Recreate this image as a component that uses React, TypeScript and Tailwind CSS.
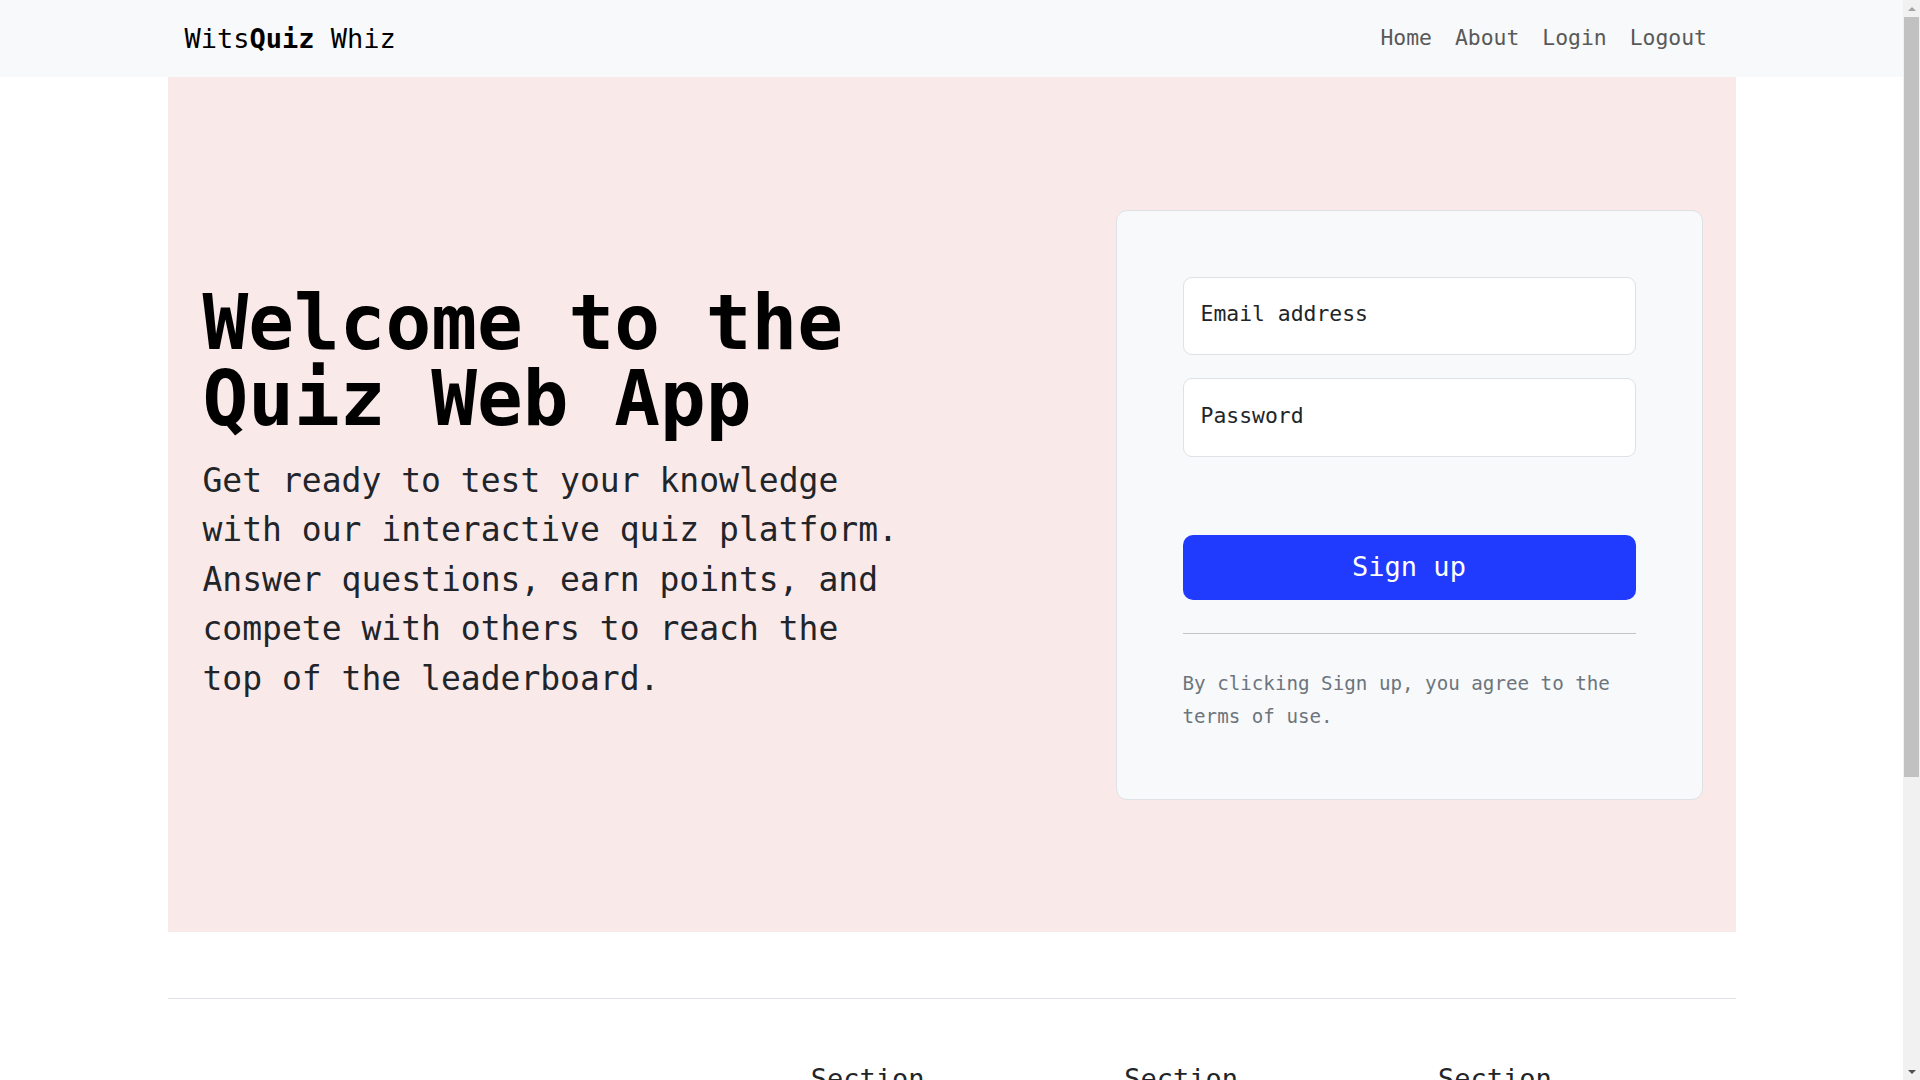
import React from 'react';

const mono = { fontFamily: '"DejaVu Sans Mono", "Liberation Mono", monospace' };

const navLinks = ['Home', 'About', 'Login', 'Logout'];
const footerLinks = ['Home', 'Features', 'Pricing', 'FAQs', 'About'];

const Navbar = () => (
  <nav className="bg-[#f8f9fa] h-[77px]">
    <div className="w-[1568px] mx-auto h-full px-[17px] flex items-center justify-between">
      <a href="#" className="text-[27px] leading-none text-black tracking-normal">
        Wits<span className="font-bold">Quiz</span> Whiz
      </a>
      <ul className="flex items-center">
        {navLinks.map((link) => (
          <li key={link}>
            <a href="#" className="block px-[11.5px] text-[21.4px] text-[#595959]">
              {link}
            </a>
          </li>
        ))}
      </ul>
    </div>
  </nav>
);

const SignupCard = () => (
  <form className="w-[587px] bg-[#f8f9fa] border border-[#dee2e6] rounded-[11px] p-[66px]">
    <input
      type="email"
      placeholder="Email address"
      className="block w-full h-[78px] bg-white border border-[#dee2e6] rounded-[9px] px-[17px] pb-[4px] text-[21.4px] text-[#212529] placeholder:text-[#212529] outline-none"
    />
    <input
      type="password"
      placeholder="Password"
      className="block w-full h-[79px] mt-[23px] bg-white border border-[#dee2e6] rounded-[9px] px-[17px] pb-[4px] text-[21.4px] text-[#212529] placeholder:text-[#212529] outline-none"
    />
    <button
      type="button"
      className="block w-full h-[65px] mt-[78px] bg-[#213bfe] rounded-[10px] text-white text-[27px]"
    >
      Sign up
    </button>
    <hr className="mt-[33px] border-0 border-t border-[#c4c5c7]" />
    <p className="mt-[33px] text-[19.2px] leading-[33px] text-[#6c757d]">
      By clicking Sign up, you agree to the terms of use.
    </p>
  </form>
);

const Hero = () => (
  <section className="w-[1568px] mx-auto h-[855px] bg-[#fae9e9] flex items-center pl-[35px] pr-[33px]">
    <div className="w-[705px]">
      <h1 className="text-[76px] leading-[76px] font-bold text-black">Welcome to the Quiz Web App</h1>
      <p className="mt-[19px] mb-[21px] text-[33px] leading-[49.5px] text-[#212529]">
        Get ready to test your knowledge with our interactive quiz platform. Answer questions, earn
        points, and compete with others to reach the top of the leaderboard.
      </p>
    </div>
    <div className="ml-auto">
      <SignupCard />
    </div>
  </section>
);

const Footer = () => (
  <footer className="w-[1568px] mx-auto mt-[66px] mb-[64px] pt-[64px] pb-[64px] border-t border-[#dee2e6] grid grid-cols-5">
    <div className="px-[16px] mb-[21px]">
      <div className="h-[32px] mb-[21px]" />
      <p className="text-[21.4px] text-[#6c757d]">© 2023</p>
    </div>
    <div className="px-[16px]" />
    {[0, 1, 2].map((i) => (
      <div key={i} className="px-[16px] mb-[21px]">
        <h5 className="text-[27px] leading-[32px] font-medium text-[#212529] mb-[11px]">Section</h5>
        <ul>
          {footerLinks.map((l) => (
            <li key={l} className="mb-[11px]">
              <a href="#" className="text-[21.4px] leading-[32px] text-[#6c757d]">
                {l}
              </a>
            </li>
          ))}
        </ul>
      </div>
    ))}
  </footer>
);

// browser scrollbar as seen in the screenshot
const Scrollbar = () => (
  <div className="w-[17px] h-full bg-[#f1f1f1] flex flex-col items-center">
    <div className="h-[17px] flex items-center justify-center">
      <div className="w-0 h-0 border-l-[4px] border-r-[4px] border-b-[4px] border-l-transparent border-r-transparent border-b-[#a3a3a3]" />
    </div>
    <div className="w-[15px] h-[760px] bg-[#c1c1c1]" />
    <div className="flex-1" />
    <div className="h-[17px] flex items-center justify-center">
      <div className="w-0 h-0 border-l-[4px] border-r-[4px] border-t-[4px] border-l-transparent border-r-transparent border-t-[#505050]" />
    </div>
  </div>
);

export default function App() {
  return (
    <div style={mono} className="h-screen flex bg-white text-[#212529]">
      <main className="flex-1 h-full overflow-hidden">
        <Navbar />
        <Hero />
        <Footer />
      </main>
      <Scrollbar />
    </div>
  );
}
